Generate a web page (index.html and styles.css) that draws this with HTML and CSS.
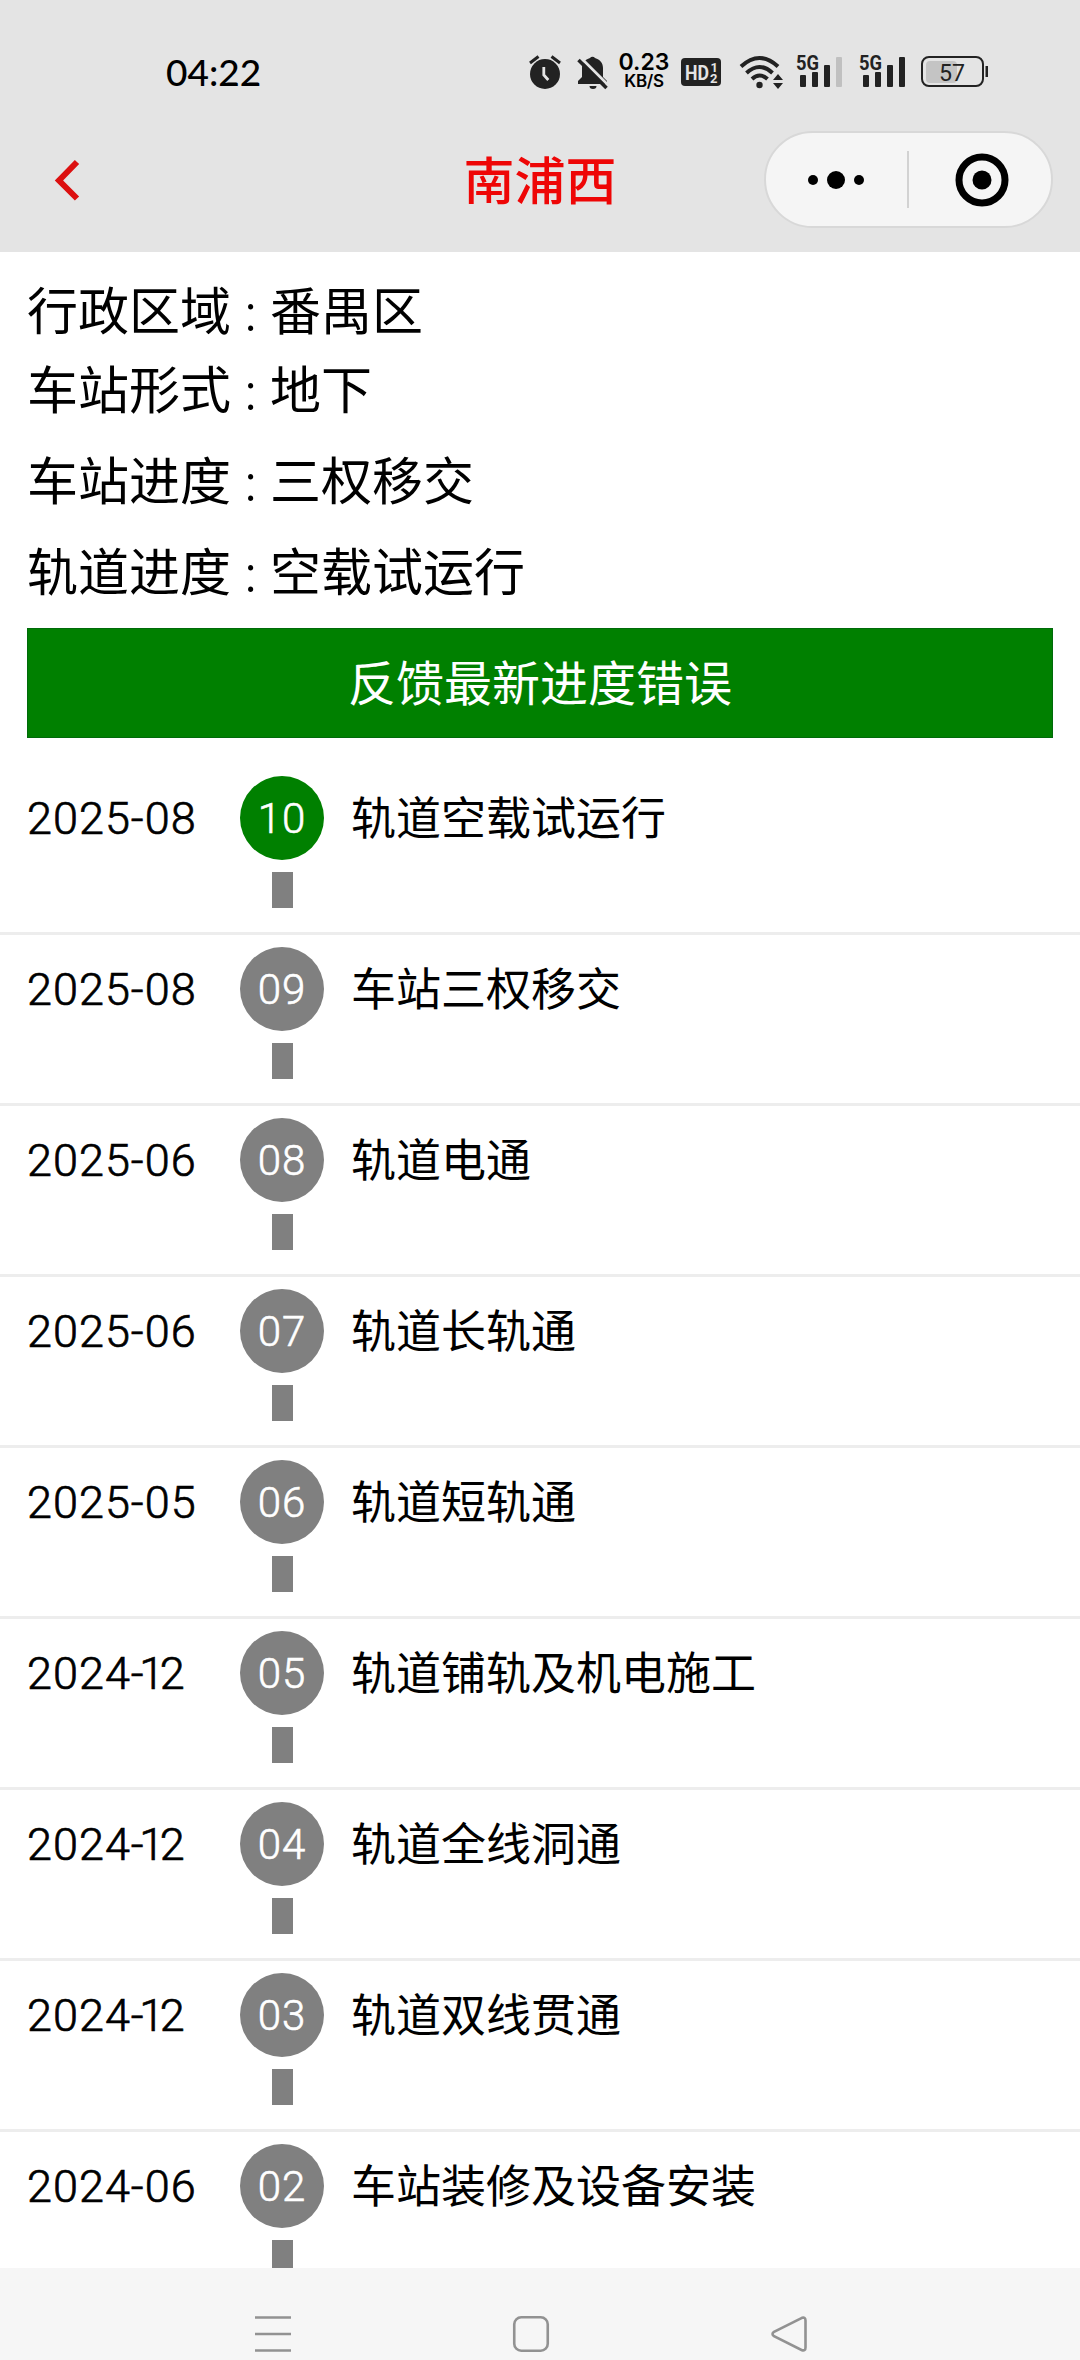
FILE: index.html
```html
<!DOCTYPE html>
<html lang="zh-CN">
<head>
    <meta charset="UTF-8">
    <meta name="viewport" content="width=device-width, initial-scale=1.0">
    <title>南浦西</title>
    <link rel="stylesheet" href="styles.css">
</head>
<body>
    <div class="page">
        <header class="header">
            <div class="status-bar">
                <span class="clock">04:22</span>
                <div class="status-icons">
                    <svg class="icon-alarm" width="32" height="36" viewBox="0 0 32 36">
                        <circle cx="16" cy="20" r="15" fill="#222"/>
                        <path d="M1 9l8.500-6.500M31 9l-8.500-6.500" stroke="#222" stroke-width="3"/>
                        <path d="M14.800 13v8l4.500 5" stroke="#e4e4e4" stroke-width="2.800" fill="none"/>
                    </svg>
                    <svg class="icon-mute" width="32" height="36" viewBox="0 0 32 36">
                        <path d="M13 4a3 3 0 0 1 5 0c5 1.500 8 5 8 10v9l4 4v3H1v-3l4-4v-9c0-5 3-8.500 8-10z" fill="#222"/>
                        <path d="M12.500 32h7a3.500 3 0 0 1-7 0z" fill="#222"/>
                        <path d="M3 3l29 29" stroke="#e4e4e4" stroke-width="3"/>
                        <path d="M1.500 6l28 28" stroke="#222" stroke-width="3.500"/>
                    </svg>
                    <div class="speed">
                        <span class="speed-value">0.23</span>
                        <span class="speed-unit">KB/S</span>
                    </div>
                    <svg class="icon-hd" width="40" height="28" viewBox="0 0 40 28">
                        <rect width="40" height="28" rx="4" fill="#222"/>
                        <text x="4" y="21.500" font-size="20.500" font-weight="bold" textLength="24" lengthAdjust="spacingAndGlyphs">HD</text>
                        <text x="29.500" y="13.500" font-size="13" font-weight="bold">1</text>
                        <text x="29" y="25" font-size="13" font-weight="bold">2</text>
                    </svg>
                    <svg class="icon-wifi" width="46" height="36" viewBox="0 0 46 36">
                        <g fill="none" stroke="#222" stroke-width="4">
                            <path d="M2 12.500q18.500-17 37 0"/>
                            <path d="M7.500 19q13-12 26 0"/>
                            <path d="M13 25q7.500-7 15.500 0"/>
                        </g>
                        <circle cx="20.500" cy="31" r="3.200" fill="#222"/>
                        <path d="M34 26l5-6 5 6zM34 29h10l-5 6z" fill="#222"/>
                    </svg>
                    <svg class="icon-signal" width="48" height="36" viewBox="0 0 48 36">
                        <text x="0" y="16" font-size="21" font-weight="bold" textLength="23" lengthAdjust="spacingAndGlyphs">5G</text>
                        <rect x="4" y="21" width="6" height="12" rx="1"/>
                        <rect x="16" y="18" width="6" height="15" rx="1"/>
                        <rect x="28" y="11" width="6" height="22" rx="1"/>
                        <rect class="bar-off" x="40" y="3" width="6" height="30" rx="1"/>
                    </svg>
                    <svg class="icon-signal" width="48" height="36" viewBox="0 0 48 36">
                        <text x="0" y="16" font-size="21" font-weight="bold" textLength="23" lengthAdjust="spacingAndGlyphs">5G</text>
                        <rect x="4" y="21" width="6" height="12" rx="1"/>
                        <rect x="16" y="18" width="6" height="15" rx="1"/>
                        <rect x="28" y="11" width="6" height="22" rx="1"/>
                        <rect x="40" y="3" width="6" height="30" rx="1"/>
                    </svg>
                    <svg class="icon-battery" width="68" height="32" viewBox="0 0 68 32">
                        <rect x="5" y="5" width="31" height="22" rx="4" fill="#c4c4c4"/>
                        <rect x="1" y="1" width="61" height="29" rx="7" fill="none" stroke="#222" stroke-width="2"/>
                        <rect x="64.500" y="10" width="2.500" height="11" fill="#222"/>
                        <text x="18" y="24.500" font-size="24" textLength="26" lengthAdjust="spacingAndGlyphs">57</text>
                    </svg>
                </div>
            </div>
            <div class="nav-bar">
                <svg class="back" width="26" height="42" viewBox="0 0 26 42">
                    <path d="M23 3L5 21.500L23 39.500" fill="none" stroke="#dc1010" stroke-width="6"/>
                </svg>
                <h1>南浦西</h1>
                <div class="capsule">
                    <svg width="48" height="20" viewBox="0 0 48 20">
                        <circle cx="5" cy="10" r="5"/>
                        <circle cx="28" cy="10" r="9"/>
                        <circle cx="51" cy="10" r="5"/>
                    </svg>
                    <span class="divider"></span>
                    <svg width="54" height="54" viewBox="0 0 54 54">
                        <circle cx="27" cy="27" r="23" fill="none" stroke="#000" stroke-width="7"/>
                        <circle cx="27" cy="27" r="9.500"/>
                    </svg>
                </div>
            </div>
        </header>

        <main class="content">
            <div class="info">
                <p>行政区域<span class="colon">:</span>番禺区</p>
                <p>车站形式<span class="colon">:</span>地下</p>
                <p class="progress">车站进度<span class="colon">:</span>三权移交</p>
                <p class="progress">轨道进度<span class="colon">:</span>空载试运行</p>
            </div>
            <button class="feedback">反馈最新进度错误</button>

            <ul class="timeline">
                <li>
                    <span class="date">2025-08</span>
                    <div class="step"><span class="number current">10</span></div>
                    <span class="name">轨道空载试运行</span>
                </li>
                <li>
                    <span class="date">2025-08</span>
                    <div class="step"><span class="number">09</span></div>
                    <span class="name">车站三权移交</span>
                </li>
                <li>
                    <span class="date">2025-06</span>
                    <div class="step"><span class="number">08</span></div>
                    <span class="name">轨道电通</span>
                </li>
                <li>
                    <span class="date">2025-06</span>
                    <div class="step"><span class="number">07</span></div>
                    <span class="name">轨道长轨通</span>
                </li>
                <li>
                    <span class="date">2025-05</span>
                    <div class="step"><span class="number">06</span></div>
                    <span class="name">轨道短轨通</span>
                </li>
                <li>
                    <span class="date">2024<span class="narrow">-12</span></span>
                    <div class="step"><span class="number">05</span></div>
                    <span class="name">轨道铺轨及机电施工</span>
                </li>
                <li>
                    <span class="date">2024<span class="narrow">-12</span></span>
                    <div class="step"><span class="number">04</span></div>
                    <span class="name">轨道全线洞通</span>
                </li>
                <li>
                    <span class="date">2024<span class="narrow">-12</span></span>
                    <div class="step"><span class="number">03</span></div>
                    <span class="name">轨道双线贯通</span>
                </li>
                <li>
                    <span class="date">2024-06</span>
                    <div class="step"><span class="number">02</span></div>
                    <span class="name">车站装修及设备安装</span>
                </li>
            </ul>
        </main>

        <footer class="system-nav">
            <svg width="36" height="36" viewBox="0 0 36 36">
                <path d="M0 1.500h36M0 18h36M0 34.500h36"/>
            </svg>
            <svg width="36" height="36" viewBox="0 0 36 36">
                <rect x="1.250" y="1.250" width="33.500" height="33.500" rx="7"/>
            </svg>
            <svg width="36" height="36" viewBox="0 0 36 36">
                <path d="M31 1.800L3 15.800Q0 18 3 20.200L31 34.200Q34.500 35.200 34.500 31.500V4.500Q34.500 .8 31 1.800z"/>
            </svg>
        </footer>
    </div>
</body>
</html>
```
FILE: styles.css
```css
* {
    margin: 0;
    padding: 0;
    box-sizing: border-box;
}

body {
    font-family: Roboto, "Noto Sans CJK SC", sans-serif;
    color: #000;
    background: #fff;
}

.page {
    display: flex;
    flex-direction: column;
    width: 1080px;
    height: 2360px;
    overflow: hidden;
}

svg {
    display: block;
    flex-shrink: 0;
    overflow: visible;
}

/* Header */
.header {
    height: 252px;
    flex-shrink: 0;
    background: #e4e4e4;
}

.status-bar {
    display: flex;
    justify-content: space-between;
    align-items: center;
    height: 131px;
    padding: 13px 91px 0 166px;
}

.clock {
    font-family: Lato, sans-serif;
    font-size: 37px;
    font-weight: 500;
    line-height: 40px;
}

.status-icons {
    display: flex;
    align-items: center;
}

.status-icons text {
    fill: #222;
}

.icon-hd text {
    fill: #e4e4e4;
}

.icon-mute {
    margin-left: 16px;
}

.speed {
    display: flex;
    flex-direction: column;
    align-items: center;
    width: 50px;
    margin-left: 10px;
    font-family: Inter, sans-serif;
    font-weight: 600;
}

.speed-value {
    font-size: 23px;
    line-height: 19px;
}

.speed-unit {
    font-size: 17px;
    line-height: 19px;
    letter-spacing: -0.3px;
}

.icon-hd {
    margin-left: 12px;
}

.icon-wifi {
    margin-left: 18px;
}

.icon-signal {
    margin-left: 11px;
}

.icon-signal + .icon-signal {
    margin-left: 15px;
}

.icon-signal rect {
    fill: #222;
}

.icon-signal .bar-off {
    fill: #c0c0c0;
}

.icon-battery {
    margin-left: 14px;
}

.nav-bar {
    display: grid;
    grid-template-columns: 1fr auto 1fr;
    align-items: center;
    height: 97px;
    padding: 0 27px 0 54px;
}

.nav-bar h1 {
    margin-left: -27px;
    padding-bottom: 3px;
    font-family: "Noto Sans CJK SC", sans-serif;
    font-size: 51px;
    font-weight: 500;
    line-height: 94px;
    color: #ee0606;
}

.capsule {
    display: flex;
    align-items: center;
    justify-self: end;
    width: 289px;
    height: 97px;
    padding-left: 42px;
    border: 2px solid #d8d8d8;
    border-radius: 49px;
    background: #f5f5f5;
}

.divider {
    width: 2px;
    height: 57px;
    margin: 0 46px 0 51px;
    background: #d2d2d2;
}

/* Station info */
.content {
    flex: 1;
    min-height: 0;
    padding-top: 18px;
    overflow: hidden;
}

.info {
    padding-left: 27px;
    font-family: "Noto Sans CJK SC", sans-serif;
    font-size: 51px;
}

.info p {
    height: 79px;
    line-height: 77px;
}

.info .progress {
    height: 91px;
    line-height: 101px;
}

.colon {
    display: inline-block;
    width: 39px;
    text-align: center;
    font-weight: 300;
}

.feedback {
    display: block;
    width: 1026px;
    height: 110px;
    margin: 18px 27px 26px;
    padding-bottom: 6px;
    border: 1px solid #006a0a;
    background: #008000;
    color: #fff;
    font-family: "Noto Sans CJK SC", sans-serif;
    font-size: 48px;
}

/* Progress timeline */
.timeline {
    list-style: none;
}

.timeline li {
    display: flex;
    height: 171px;
    padding: 12px 27px 0;
    border-bottom: 3px solid #ededed;
    font-size: 45px;
    line-height: 84px;
}

.date {
    width: 213px;
    font-weight: 300;
    line-height: 86px;
    letter-spacing: 1px;
    -webkit-text-stroke: 0.7px #000;
}

.narrow {
    letter-spacing: -4.5px;
}

.step {
    width: 84px;
}

.step::after {
    content: "";
    display: block;
    width: 21px;
    height: 36px;
    margin: 12px auto 0;
    background: #808080;
}

.number {
    display: block;
    height: 84px;
    border-radius: 50%;
    background: #808080;
    color: #fff;
    font-size: 42px;
    font-weight: 300;
    line-height: 85px;
    text-align: center;
    letter-spacing: 1px;
    -webkit-text-stroke: 0.6px #fff;
}

.number.current {
    background: #008000;
}

.name {
    margin-left: 27px;
    line-height: 88px;
}

/* System navigation */
.system-nav {
    display: flex;
    justify-content: space-between;
    height: 92px;
    flex-shrink: 0;
    padding: 48px 273px 0 255px;
    background: #f6f6f6;
}

.system-nav svg {
    fill: none;
    stroke: #929292;
    stroke-width: 2.6;
}
```
